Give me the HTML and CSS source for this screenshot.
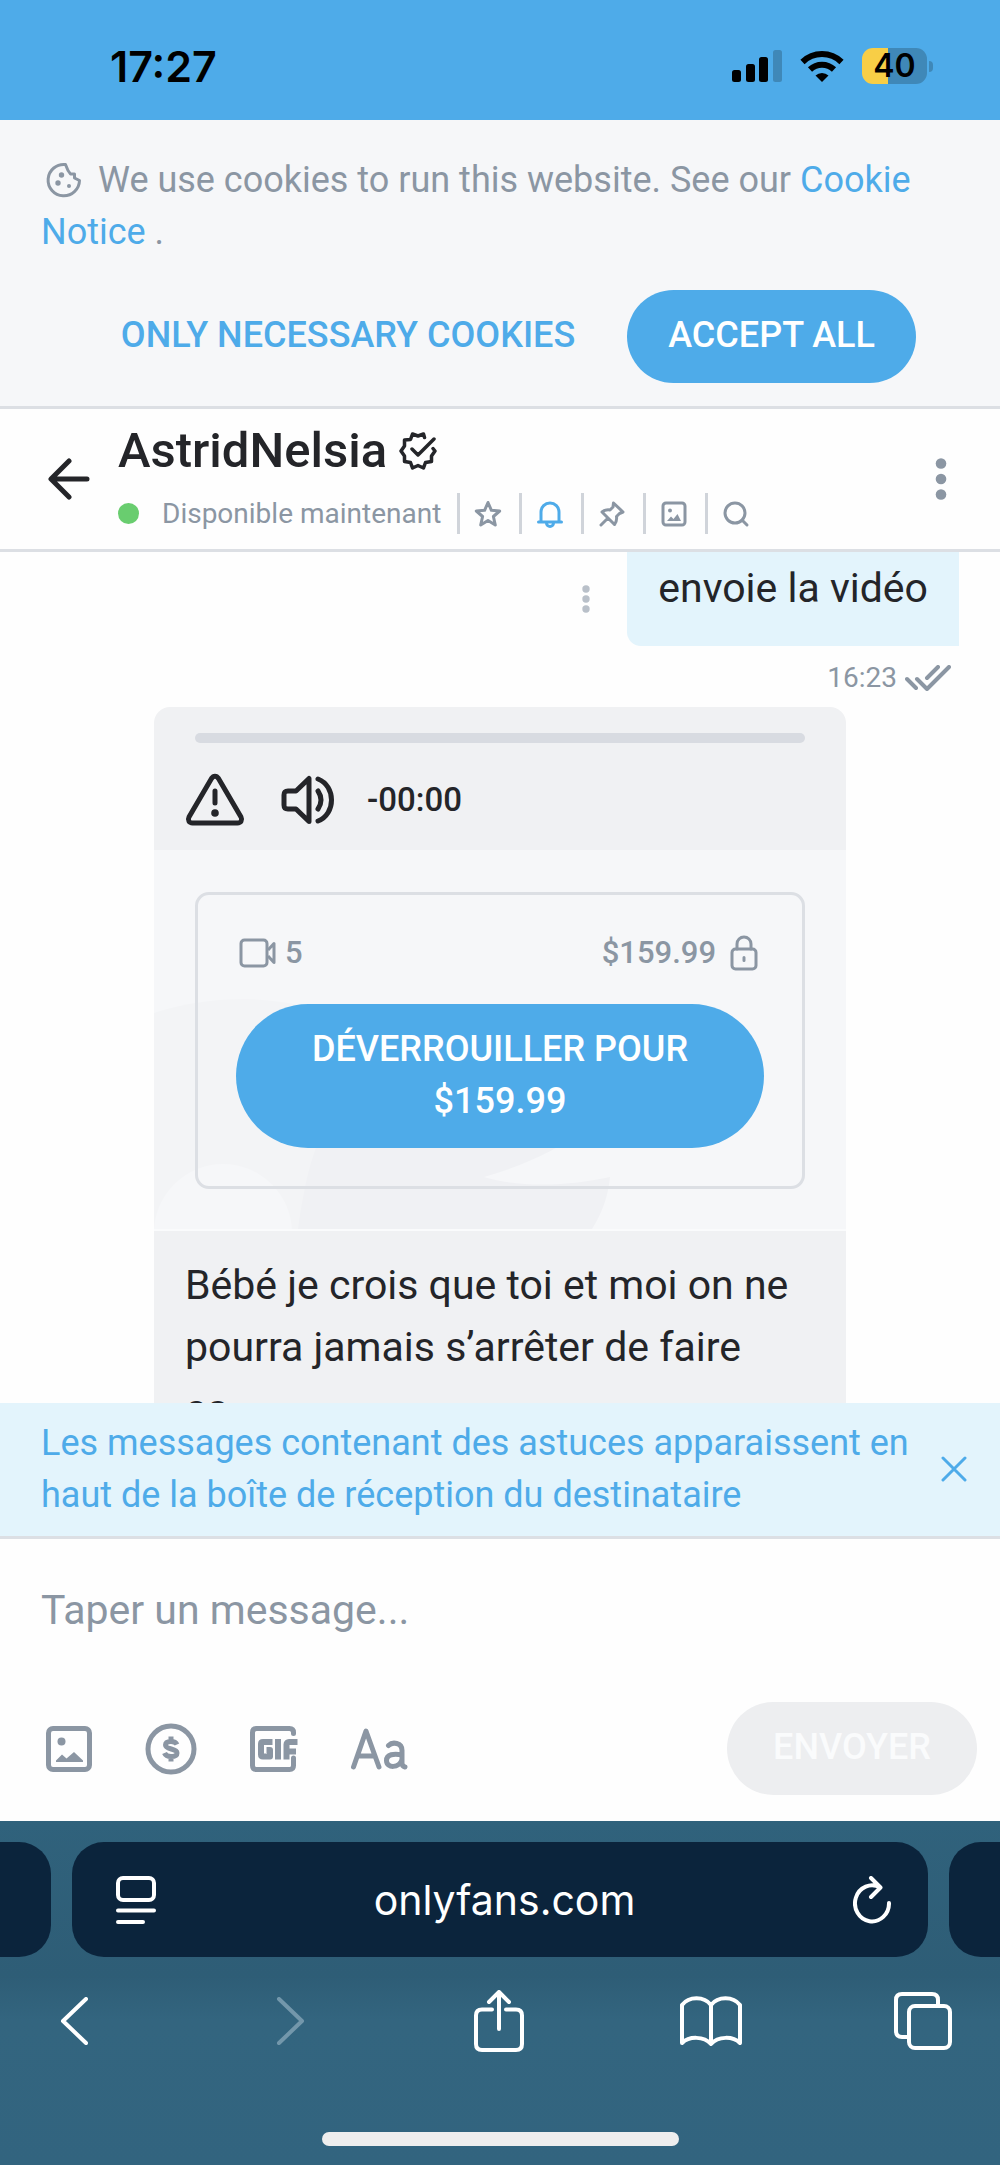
FILE: index.html
```html
<!DOCTYPE html>
<html lang="fr">
<head>
<meta charset="utf-8">
<meta name="viewport" content="width=device-width, initial-scale=1">
<title>AstridNelsia</title>
<link rel="stylesheet" href="styles.css">
</head>
<body>
<div class="status">
  <time class="clock">17:27</time>
  <div class="status-icons">
    <svg width="50" height="32" viewBox="0 0 50 32"><rect x="0" y="20" width="9" height="12" rx="2.500"/><rect x="14" y="14" width="9" height="18" rx="2.500"/><rect x="27" y="7" width="9" height="25" rx="2.500"/><rect class="dim" x="41" y="0" width="9" height="32" rx="2.500"/></svg>
    <svg width="44" height="32" viewBox="0 0 44 32"><path d="M22 32 15.500 25.500a9.500 9.500 0 0 1 13 0z"/><path fill="none" stroke="#000" stroke-width="6" d="M10 19.500a17.500 17.500 0 0 1 24 0M2.500 12a28 28 0 0 1 39 0"/></svg>
    <div class="battery"><span class="level">40</span><span class="nub"></span></div>
  </div>
</div>

<section class="cookies">
  <p><svg class="cookie" width="36" height="36" viewBox="0 0 36 36"><g fill="none" stroke="currentColor" stroke-width="3" stroke-linejoin="round"><path d="M19.500 2.500A15.700 15.700 0 1 0 33.500 18.500L28.500 16v-4h-4L22 8.500z"/></g><g fill="currentColor"><circle cx="15.500" cy="13" r="2.700"/><circle cx="12" cy="21" r="2.700"/><circle cx="23" cy="24" r="2"/></g></svg>We use cookies to run this website. See our <a href="#">Cookie Notice</a> .</p>
  <div class="cookie-actions">
    <button class="btn text">ONLY NECESSARY COOKIES</button>
    <button class="btn solid">ACCEPT ALL</button>
  </div>
</section>

<header class="chat-head">
  <button class="icon-btn back" aria-label="Retour"><svg width="42" height="42" viewBox="0 0 42 42" fill="none" stroke="currentColor" stroke-width="5" stroke-linecap="round" stroke-linejoin="round"><path d="M39 21H3.500M21 3 3 21l18 18"/></svg></button>
  <div class="who">
    <h1>AstridNelsia <svg width="38" height="38" viewBox="0 0 38 38" fill="none" stroke="currentColor" stroke-width="3.500" stroke-linecap="round" stroke-linejoin="round"><path d="M25.500 5.500 24.500 2 19 4 13.500 2 11.500 7.500 5.500 8 5.500 14 2 19 5.500 24 5.500 29.500 11.500 30.500 13.500 36 19 33.500 24.500 36 26.500 30.500 32.500 29.500 32.500 24 36 19 34 16.500M13 17l6 6L35 7"/></svg></h1>
    <div class="meta">
      <span class="dot"></span><span class="avail">Disponible maintenant</span>
      <button class="tool" aria-label="Favori"><svg width="28" height="28" viewBox="0 0 28 28"><path d="M14 2.500l3.400 7.800 8.300.7-6.300 5.500 1.900 8.500L14 20.500 6.700 25l1.900-8.500L2.300 11l8.300-.7z"/></svg></button>
      <button class="tool blue" aria-label="Notifications"><svg width="28" height="28" viewBox="0 0 28 28"><path d="M5 22V12a9 9 0 0 1 18 0v10M2.500 22h23M10.500 23a3.500 3.500 0 0 0 7 0"/></svg></button>
      <button class="tool" aria-label="Épingler"><svg width="28" height="28" viewBox="0 0 28 28"><path d="M15.500 3 25 12l-3.500 1.500-3 3c.5 3.500 0 5.500-2 8L4 12c2.500-2 5-2.500 8-2l3-3zM10 18 3 25"/></svg></button>
      <button class="tool" aria-label="Galerie"><svg width="28" height="28" viewBox="0 0 28 28"><rect x="3" y="3" width="22" height="22" rx="3"/><path class="fill" d="M7 21l4-4.500 2.500 2.500 4-5L21 21z"/><circle class="fill" cx="10" cy="10.500" r="2"/></svg></button>
      <button class="tool" aria-label="Rechercher"><svg width="28" height="28" viewBox="0 0 28 28"><circle cx="13" cy="13" r="10"/><path d="M20 20l5 5"/></svg></button>
    </div>
  </div>
  <button class="icon-btn more" aria-label="Plus"><svg width="12" height="42" viewBox="0 0 12 42" fill="currentColor"><circle cx="6" cy="5.500" r="5.300"/><circle cx="6" cy="21" r="5.300"/><circle cx="6" cy="36.500" r="5.300"/></svg></button>
</header>

<main class="thread">
  <div class="sent">
    <button class="icon-btn faint" aria-label="Options du message"><svg width="8" height="28" viewBox="0 0 8 28" fill="currentColor"><circle cx="4" cy="4" r="3.700"/><circle cx="4" cy="14" r="3.700"/><circle cx="4" cy="24" r="3.700"/></svg></button>
    <div class="bubble">envoie la vidéo</div>
  </div>
  <div class="stamp">16:23 <svg width="46" height="26" viewBox="0 0 46 26" fill="none" stroke="currentColor" stroke-width="4" stroke-linecap="round" stroke-linejoin="round"><path d="M2 14l9 9M12 14l10 10L44 2M22 13 33 2"/></svg></div>

  <article class="card">
    <div class="player">
      <div class="track"></div>
      <div class="controls">
        <svg width="60" height="54" viewBox="0 0 60 54" fill="none" stroke="currentColor" stroke-width="5" stroke-linecap="round" stroke-linejoin="round"><path d="M26.500 5.500 4 44c-1.500 3 0 6 3.500 6h45c3.500 0 5-3 3.500-6L33.500 5.500c-2-3-5-3-7 0zM30 18v12"/><circle cx="30" cy="40" r="3.800" stroke="none" fill="currentColor"/></svg>
        <svg width="54" height="50" viewBox="0 0 54 50" fill="none" stroke="currentColor" stroke-width="5" stroke-linecap="round" stroke-linejoin="round"><path d="M28 3.500v43L15 34H7c-3 0-4-1-4-4V20c0-3 1-4 4-4h8zM37 16c4 6 4 12 0 18M37 4c18 7 18 35 0 42"/></svg>
        <span>-00:00</span>
      </div>
    </div>
    <div class="locked">
      <svg class="mark" viewBox="0 0 692 379" preserveAspectRatio="xMinYMin slice"><path fill="#f3f4f6" d="M0 163c90-30 200-10 260 50L240 379H0z"/><path fill="#f0f1f4" d="M144 379c10-70 22-110 60-140h260c-10 30-60 67-134 88 40 12 90 8 126 0-2 20-8 36-18 52z"/><circle fill="#f6f7f9" cx="69" cy="383" r="69"/></svg>
      <div class="offer">
        <div class="offer-row">
          <span class="pair"><svg width="38" height="30" viewBox="0 0 38 30" fill="none" stroke="currentColor" stroke-width="3" stroke-linejoin="round"><rect x="3" y="2" width="26" height="26" rx="3.500"/><path d="M30 12l6-6.500v19L30 18"/></svg>5</span>
          <span class="pair price">$159.99<svg width="28" height="36" viewBox="0 0 28 36" fill="none" stroke="currentColor" stroke-width="3" stroke-linecap="round"><rect x="2" y="14" width="24" height="20" rx="3.500"/><path d="M7 14V9a7 7 0 0 1 14 0v5M14 22.500v3"/></svg></span>
        </div>
        <button class="btn solid unlock">DÉVERROUILLER POUR $159.99</button>
      </div>
    </div>
    <p class="caption">Bébé je crois que toi et moi on ne pourra jamais s’arrêter de faire<br>ça</p>
  </article>
</main>

<aside class="tip">
  <p>Les messages contenant des astuces apparaissent en haut de la boîte de réception du destinataire</p>
  <button class="icon-btn" aria-label="Fermer"><svg width="26" height="26" viewBox="0 0 26 26" fill="none" stroke="currentColor" stroke-width="3" stroke-linecap="round"><path d="M2 2l22 22M24 2 2 24"/></svg></button>
</aside>

<form class="composer">
  <input type="text" aria-label="Message" placeholder="Taper un message...">
  <div class="composer-row">
    <button type="button" class="icon-btn" aria-label="Image"><svg width="46" height="46" viewBox="0 0 46 46"><rect x="2.500" y="2.500" width="41" height="41" rx="4.500" fill="none" stroke="currentColor" stroke-width="5"/><path fill="currentColor" d="M10 36v-1.500l6-6 4.500 4 7.500-6.500 9 8.500V36z"/><circle fill="currentColor" cx="15.500" cy="15.500" r="4"/></svg></button>
    <button type="button" class="icon-btn" aria-label="Pourboire"><svg width="52" height="52" viewBox="0 0 52 52" fill="none" stroke="currentColor" stroke-width="5"><circle cx="26" cy="26" r="23"/><path d="M32 21.500c-1-2-3-3-6-3-3.500 0-5.500 1.300-5.500 3.500 0 5 11.500 3 11.500 8 0 2.300-2.500 3.500-6 3.500-3 0-5.500-1-6.500-3.500M26 13.500v5M26 33.500v5"/></svg></button>
    <button type="button" class="icon-btn" aria-label="GIF"><svg width="48" height="46" viewBox="0 0 48 46" fill="none" stroke="currentColor" stroke-width="5" stroke-linecap="round"><path d="M43.500 7.500V6.500c0-2.500-1.500-4-4-4H6.500c-2.500 0-4 1.500-4 4v33c0 2.500 1.500 4 4 4h33c2.500 0 4-1.500 4-4V32"/><path stroke-width="6" stroke-linecap="butt" stroke-linejoin="round" d="M22.500 16H13c-1.500 0-2 .7-2 2v10.500c0 1.500.7 2 2 2h7v-6.500h-3.500M28 13v20.500M36.500 33.500V18.500c0-1.500 1-2.500 2.500-2.500h8.500M36.500 25.500H46"/></svg></button>
    <button type="button" class="icon-btn" aria-label="Mise en forme"><svg width="57" height="42" viewBox="0 0 57 42" fill="none" stroke="currentColor" stroke-width="5" stroke-linecap="round" stroke-linejoin="round"><path d="M2.500 39 15 3l13 36M6.500 28h17M37.500 17.500c4-4 13.500-3 13.500 5V35c0 2 1 3.500 3 4M51 27c-8-2-15.500-.5-15.500 5.500 0 8 13 8 15.500-1"/></svg></button>
    <button class="btn send" disabled>ENVOYER</button>
  </div>
</form>

<footer class="browser">
  <div class="tabs">
    <div class="tab side left"></div>
    <div class="tab current">
      <svg width="40" height="48" viewBox="0 0 40 48"><rect x="2" y="2" width="36" height="22" rx="5"/><path d="M2 34.500h36M2 46h25"/></svg>
      <span>onlyfans.com</span>
      <svg width="38" height="48" viewBox="0 0 38 48"><path d="M36 27A17 18 0 1 1 27 11.500M18 2l9.500 9.500L18 21"/></svg>
    </div>
    <div class="tab side right"></div>
  </div>
  <nav class="nav">
    <button class="icon-btn" aria-label="Précédent"><svg width="28" height="48" viewBox="0 0 28 48"><path d="M26 2 3 24l23 22"/></svg></button>
    <button class="icon-btn" aria-label="Suivant" disabled><svg width="38" height="48" viewBox="0 0 38 48"><path d="M12 2l23 22-23 22"/></svg></button>
    <button class="icon-btn" aria-label="Partager"><svg width="50" height="62" viewBox="0 0 50 62"><path d="M18 19.500H8c-4 0-6 2-6 6V54c0 4 2 6 6 6h34c4 0 6-2 6-6V25.500c0-4-2-6-6-6H32M25 39V2M15 12 25 2l10 10"/></svg></button>
    <button class="icon-btn" aria-label="Signets"><svg width="62" height="50" viewBox="0 0 62 50"><path d="M31 9C24 0 9 0 2 9v38c7-7 22-7 29 1 7-8 22-8 29-1V9C53 0 38 0 31 9zM31 9v38"/></svg></button>
    <button class="icon-btn" aria-label="Onglets"><svg width="58" height="58" viewBox="0 0 58 58"><path d="M14 45H8c-4 0-6-2-6-6V8c0-4 2-6 6-6h30c4 0 6 2 6 6v5"/><rect x="15" y="14" width="41" height="42" rx="6"/></svg></button>
  </nav>
  <div class="home"></div>
</footer>
</body>
</html>
```
FILE: styles.css
```css
* { box-sizing: border-box; }

:root {
  --blue: #4eabe9;
  --grey: #8b96a3;
  --ink: #242529;
  --line: #dcdfe4;
  --pale: #e3f4fc;
  --panel: #f6f7f9;
  --panel-dark: #f0f1f3;
}

body {
  margin: 0;
  min-height: 100vh;
  display: flex;
  flex-direction: column;
  background: #fefefe;
  color: var(--ink);
  font-family: Roboto, "Liberation Sans", sans-serif;
  font-size: 36px;
  line-height: 52px;
}

p, h1 { margin: 0; }
a { color: var(--blue); text-decoration: none; }
svg { display: block; flex: none; }
button { font: inherit; border: 0; background: none; padding: 0; color: inherit; }
.icon-btn { display: flex; align-items: center; }

/* Status bar */
.status {
  height: 120px;
  padding: 12px 67px 0 110px;
  display: flex;
  align-items: center;
  justify-content: space-between;
  background: var(--blue);
  color: #000;
}
.clock { font: 600 43px/48px Inter, sans-serif; }
.status-icons { display: flex; align-items: center; gap: 18px; }
.dim { fill: #3f88b8; }
.battery { display: flex; align-items: center; gap: 2px; }
.level {
  width: 65px;
  height: 36px;
  border-radius: 11px;
  background: linear-gradient(90deg, #f8ce46 40%, #3f88b8 40%);
  font: 600 32px/36px Inter, sans-serif;
  text-align: center;
}
.nub { width: 4px; height: 11px; border-radius: 0 4px 4px 0; background: #3f88b8; }

/* Cookie notice */
.cookies {
  padding: 34px 41px 23px;
  background: var(--panel);
  border-bottom: 3px solid var(--line);
  color: var(--grey);
}
.cookie { display: inline-block; margin: 0 16px 0 5px; vertical-align: -6px; }
.cookie-actions {
  display: flex;
  justify-content: flex-end;
  align-items: center;
  gap: 52px;
  padding: 32px 43px 0 0;
}
.btn { font-weight: 500; min-height: 93px; border-radius: 72px; padding-bottom: 4px; }
.text { color: var(--blue); }
.solid { background: var(--blue); color: #fff; padding: 0 41px 4px; }

/* Conversation header */
.chat-head {
  display: flex;
  align-items: center;
  padding: 0 53px 0 48px;
  border-bottom: 3px solid var(--line);
}
.who { flex: 1; margin-left: 28px; padding: 10px 0 15px; }
h1 {
  display: flex;
  align-items: center;
  gap: 12px;
  font-size: 49px;
  font-weight: 500;
  line-height: 64px;
}
.meta {
  display: flex;
  align-items: center;
  margin-top: 10px;
  color: var(--grey);
  font-size: 28px;
  line-height: 40px;
}
.dot { width: 21px; height: 21px; border-radius: 50%; background: #69cd6f; }
.avail { margin: 0 16px 0 23px; }
.tool {
  height: 41px;
  width: 62px;
  padding: 0 0 0 14px;
  border-left: 3px solid #d0d4da;
  color: var(--grey);
}
.tool svg { fill: none; stroke: currentColor; stroke-width: 3; stroke-linejoin: round; stroke-linecap: round; }
.tool svg .fill { fill: currentColor; stroke: none; }
.blue { color: var(--blue); }
.more { color: var(--grey); }

/* Messages */
.thread {
  flex: 1 0 851px;
  height: 851px;
  overflow: hidden;
  display: flex;
  flex-direction: column;
  font-size: 41px;
  line-height: 62px;
}
.sent { display: flex; justify-content: flex-end; padding-right: 41px; gap: 37px; flex: none; }
.faint { color: #b9c0c9; }
.bubble {
  padding: 5px 31px 27px;
  background: var(--pale);
  border-radius: 0 0 0 14px;
}
.stamp {
  display: flex;
  justify-content: flex-end;
  align-items: center;
  flex: none;
  gap: 8px;
  padding: 12px 49px 9px 0;
  color: var(--grey);
  font-size: 28px;
  line-height: 40px;
}
.card {
  flex: none;
  margin: 0 154px;
  border-radius: 16px 16px 0 0;
  background: var(--panel-dark);
  overflow: hidden;
}
.player { padding: 26px 31px 19px; }
.track { margin: 0 10px; height: 10px; border-radius: 5px; background: #d8dbe1; }
.controls {
  display: flex;
  align-items: center;
  gap: 36px;
  padding: 26px 0 0;
  font-size: 33px;
  font-weight: 500;
}
.controls span { margin-left: -4px; }
.locked {
  position: relative;
  padding: 42px 41px 40px;
  background: var(--panel);
  border-bottom: 2px solid #fafbfc;
}
.mark { position: absolute; inset: 0; width: 100%; height: 100%; }
.offer {
  position: relative;
  padding: 36px 38px 38px;
  border: 3px solid var(--line);
  border-radius: 14px;
}
.offer-row {
  display: flex;
  justify-content: space-between;
  padding: 0 6px 29px 2px;
  color: var(--grey);
  font-size: 31px;
  line-height: 44px;
  font-weight: 500;
}
.pair { display: flex; align-items: center; gap: 9px; }
.price { gap: 14px; }
.unlock { display: block; width: 100%; padding: 19px 70px 21px; font-size: 36px; line-height: 52px; }
.caption { padding: 23px 31px; }

/* Tip banner */
.tip {
  display: flex;
  align-items: center;
  gap: 20px;
  padding: 14px 33px 15px 41px;
  background: var(--pale);
  border-bottom: 3px solid var(--line);
  color: var(--blue);
}
.tip p { flex: 1; }

/* Composer */
.composer { padding: 40px 23px 26px 41px; color: var(--grey); }
.composer input {
  display: block;
  width: 100%;
  height: 62px;
  margin-bottom: 61px;
  padding: 0;
  border: 0;
  outline: 0;
  background: none;
  color: var(--ink);
  font: 41px/62px Roboto, sans-serif;
}
.composer input::placeholder { color: var(--grey); opacity: 1; }
.composer-row { display: flex; align-items: center; gap: 53px; padding-left: 5px; }
.send {
  margin-left: auto;
  padding: 0 46px 4px;
  background: #edeef0;
  color: #fafbfc;
}

/* Browser chrome */
.browser {
  height: 344px;
  padding-top: 21px;
  display: flex;
  flex-direction: column;
  background: linear-gradient(#30627c, #2e5d76 45%, #33657f 58%, #32647f);
  color: #fff;
}
.browser svg { fill: none; stroke: currentColor; stroke-width: 4; stroke-linecap: round; stroke-linejoin: round; }
.tabs { display: flex; gap: 21px; }
.tab { height: 115px; background: #0b243c; border-radius: 32px; }
.side { width: 51px; }
.left { border-radius: 0 32px 32px 0; }
.right { border-radius: 32px 0 0 32px; }
.current {
  flex: 1;
  display: flex;
  align-items: center;
  justify-content: space-between;
  padding: 0 37px 0 44px;
  font: 41px/48px Inter, sans-serif;
}
.nav {
  display: flex;
  justify-content: space-between;
  align-items: center;
  height: 66px;
  margin-top: 31px;
  padding: 0 46px 0 43px;
}
.nav .icon-btn { width: 62px; justify-content: center; }
.nav :disabled { color: #7397ab; }
.home {
  width: 357px;
  height: 14px;
  margin: auto auto 19px;
  border-radius: 7px;
  background: #eee;
}
```
